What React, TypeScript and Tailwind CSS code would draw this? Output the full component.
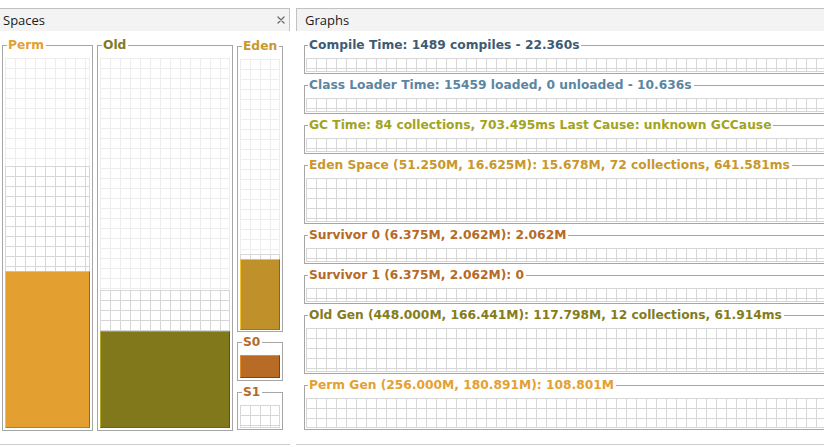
import React from 'react';

// grid backgrounds used by the space columns and the graph strips
const lightGrid =
  'bg-[linear-gradient(to_right,#ededed_1px,transparent_1px),linear-gradient(to_bottom,#ededed_1px,transparent_1px)] [background-size:10px_10px] border-r border-[#ededed]';
const darkGrid =
  'bg-[linear-gradient(to_right,#d7d7d7_1px,transparent_1px),linear-gradient(to_bottom,#d7d7d7_1px,transparent_1px)] [background-size:10px_10px] border-r border-[#d7d7d7]';

const legendCls = "ml-[2px] pl-[1px] pr-[2px] text-[12.25px] leading-[14px] font-bold font-['DejaVu_Sans',sans-serif]";

interface Graph {
  title: string;
  color: string;
  h: string;
}

const graphs: Graph[] = [
  { title: 'Compile Time: 1489 compiles - 22.360s', color: 'text-[#3e5b75]', h: 'h-[14px]' },
  { title: 'Class Loader Time: 15459 loaded, 0 unloaded - 10.636s', color: 'text-[#5b86a3]', h: 'h-[14px]' },
  { title: 'GC Time: 84 collections, 703.495ms Last Cause: unknown GCCause', color: 'text-[#a3a322]', h: 'h-[14px]' },
  { title: 'Eden Space (51.250M, 16.625M): 15.678M, 72 collections, 641.581ms', color: 'text-[#c9972c]', h: 'h-[44px]' },
  { title: 'Survivor 0 (6.375M, 2.062M): 2.062M', color: 'text-[#b66a26]', h: 'h-[14px]' },
  { title: 'Survivor 1 (6.375M, 2.062M): 0', color: 'text-[#b66a26]', h: 'h-[14px]' },
  { title: 'Old Gen (448.000M, 166.441M): 117.798M, 12 collections, 61.914ms', color: 'text-[#847c1b]', h: 'h-[44px]' },
  { title: 'Perm Gen (256.000M, 180.891M): 108.801M', color: 'text-[#e5a032]', h: 'h-[30px]' },
];

const PanelHeader: React.FC<{ title: string; closable?: boolean; className?: string }> = ({ title, closable, className }) => (
  <div className={`flex h-[23px] items-center justify-between border-t border-[#c2c2c2] bg-[#f3f3f3] ${className ?? ''}`}>
    <span className="text-[13px] leading-none text-[#1a1a1a] font-['Open_Sans',sans-serif]">{title}</span>
    {closable && (
      <svg width="8" height="8" viewBox="0 0 8 8" className="mr-[4px]">
        <path d="M1 1L7 7M7 1L1 7" stroke="#6e6e6e" strokeWidth="1.4" strokeLinecap="round" />
      </svg>
    )}
  </div>
);

const App: React.FC = () => {
  return (
    <div className="h-[447px] w-[824px] overflow-hidden bg-white pt-[8px]">
      <div className="flex gap-[6px]">
        {/* Spaces */}
        <div className="w-[290px] shrink-0">
          <PanelHeader title="Spaces" closable className="border-r pl-[3px]" />
          <div className="flex h-[414px] gap-[4px] border-b border-[#cdcdcd] pl-[2px] pt-[7px]">
            <fieldset className="h-fit w-[91px] border border-[#a6a6a6] px-[2px] pt-[6px] pb-[2px]">
              <legend className={`${legendCls} text-[#e5a032]`}>Perm</legend>
              <div className="flex h-[370px] flex-col">
                <div className={`flex-1 ${lightGrid}`} />
                <div className={`h-[105px] ${darkGrid}`} />
                <div className="h-[157px] border border-t-[#f6c13a] border-l-[#f6c13a] border-r-[#a26518] border-b-[#c07c20] bg-[#e49f31]" />
              </div>
            </fieldset>

            <fieldset className="h-fit w-[136px] border border-[#a6a6a6] px-[2px] pt-[6px] pb-[2px]">
              <legend className={`${legendCls} text-[#847c1b]`}>Old</legend>
              <div className="flex h-[370px] flex-col">
                <div className={`flex-1 ${lightGrid}`} />
                <div className={`h-[41px] ${darkGrid}`} />
                <div className="h-[97px] border border-t-[#a9a020] border-l-[#b3a822] border-r-[#5a5410] border-b-[#6a6414] bg-[#80781a]" />
              </div>
            </fieldset>

            <div className="flex w-[46px] flex-col">
              <fieldset className="mt-[1px] border border-[#a6a6a6] px-[2px] pt-[6px] pb-[1px]">
                <legend className={`${legendCls} text-[#c9972c]`}>Eden</legend>
                <div className="flex h-[271px] flex-col">
                  <div className={`flex-1 ${lightGrid}`} />
                  <div className={`h-[5px] ${darkGrid}`} />
                  <div className="h-[71px] border border-t-[#f2c232] border-l-[#f2c232] border-r-[#8c6414] border-b-[#a07418] bg-[#c0902a]" />
                </div>
              </fieldset>

              <fieldset className="mt-[3px] border border-[#a6a6a6] px-[2px] pt-[6px] pb-[2px]">
                <legend className={`${legendCls} text-[#b66a26]`}>S0</legend>
                <div className="h-[23px] border border-t-[#e28c32] border-l-[#e28c32] border-r-[#7a4515] border-b-[#7a4515] bg-[#b86b25]" />
              </fieldset>

              <fieldset className="mt-[4px] border border-[#a6a6a6] px-[2px] pt-[6px] pb-[1px]">
                <legend className={`${legendCls} text-[#b66a26]`}>S1</legend>
                <div className={`h-[23px] ${darkGrid} border-b`} />
              </fieldset>
            </div>
          </div>
        </div>

        {/* Graphs */}
        <div className="min-w-0 flex-1">
          <PanelHeader title="Graphs" className="border-l pl-[8px]" />
          <div className="flex h-[414px] flex-col gap-[4px] overflow-hidden border-b border-[#cdcdcd] pl-[8px] pt-[7px]">
            {graphs.map((g) => (
              <fieldset key={g.title} className="w-[560px] shrink-0 border border-[#a6a6a6] px-[1px] pt-[6px] pb-[1px]">
                <legend className={`${legendCls} ${g.color} whitespace-nowrap`}>{g.title}</legend>
                <div className={`${g.h} ${darkGrid} border-b`} />
              </fieldset>
            ))}
          </div>
        </div>
      </div>
    </div>
  );
};

export default App;
